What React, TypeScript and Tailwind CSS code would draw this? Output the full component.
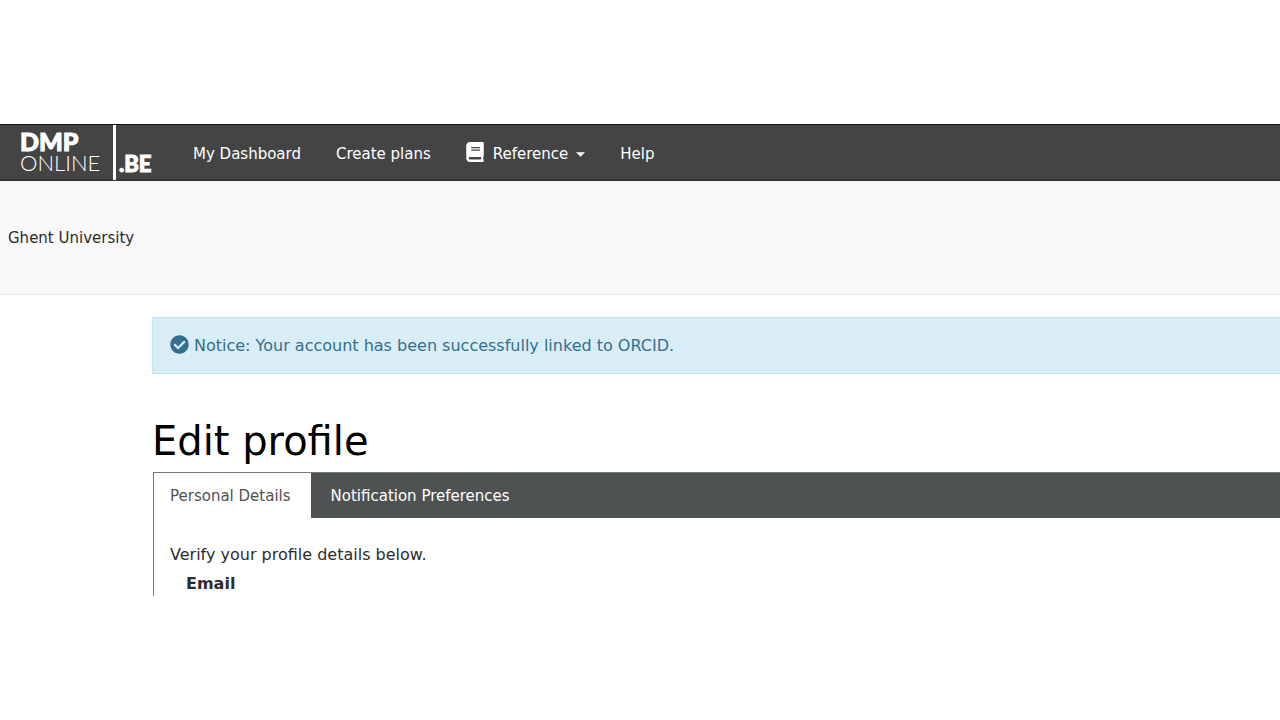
import { FaBook, FaCheckCircle } from "react-icons/fa";

function Logo() {
  return (
    <svg viewBox="0 0 160 56" className="h-14 w-40 fill-white" role="img" aria-label="DMPonline.be">
      <text x="20" y="26" fontSize="25" fontWeight="900" fontFamily="Lato, sans-serif" stroke="white" strokeWidth="1">DMP</text>
      <text x="20" y="46" fontSize="22" fontWeight="300" fontFamily="Lato, sans-serif">ONLINE</text>
      <rect x="113" y="0" width="3" height="55" />
      <text x="119" y="47" fontSize="22" fontWeight="900" fontFamily="Lato, sans-serif" stroke="white" strokeWidth="1">.BE</text>
    </svg>
  );
}

function Header() {
  return (
    <header className="flex h-[57px] items-stretch border-t border-b-2 border-t-[#111111] border-b-[#333333] bg-[#444444]">
      <a href="#home" className="block h-14 w-40 shrink-0">
        <Logo />
      </a>
      <nav aria-label="Main" className="flex items-center gap-[35px] pt-[3px] pl-[33px] text-white">
        <a href="#dashboard">My Dashboard</a>
        <a href="#create">Create plans</a>
        <button type="button" className="flex items-center">
          <FaBook className="mr-[9px] -mt-1 h-5 w-[18px]" aria-hidden="true" />
          Reference
          <svg viewBox="0 0 10 5" className="mt-0.5 ml-2 h-[5px] w-[9px] fill-white" aria-hidden="true">
            <path d="M0 0h10L5 5z" />
          </svg>
        </button>
        <a href="#help">Help</a>
      </nav>
    </header>
  );
}

export default function App() {
  return (
    <div className="overflow-x-hidden bg-white py-31 font-['DejaVu_Sans',Verdana,sans-serif] text-[15px] leading-6 text-[#2c2c2c]">
      <Header />
      <div className="border-b border-[#e7e7e7] bg-[#f8f8f8] px-2 pt-[45px] pb-11">
        <p>Ghent University</p>
      </div>
      <main className="pt-[22px] pl-[152px]">
        <div role="status" className="flex items-center gap-[5px] border border-r-0 border-[#bce8f1] bg-[#d9edf7] px-[17px] pt-4 pb-[15px] text-base text-[#31708f]">
          <FaCheckCircle className="-mt-1 size-[19px]" aria-hidden="true" />
          <span>Notice: Your account has been successfully linked to ORCID.</span>
        </div>
        <h1 className="mt-10 text-[40px] leading-[54px] text-black">Edit profile</h1>
        <section className="mt-1 ml-px border-t border-l border-[#777777]">
          <div role="tablist" className="flex h-[45px] bg-[#4f5253]">
            <button type="button" role="tab" aria-selected="true" className="bg-white pr-5 pl-4 text-[#4f5253]">Personal Details</button>
            <button type="button" role="tab" aria-selected="false" className="px-5 text-white">Notification Preferences</button>
          </div>
          <div role="tabpanel" className="px-4 pt-[25px]">
            <p className="text-base">Verify your profile details below.</p>
            <p className="mt-[5px] px-4 text-base font-bold">Email</p>
          </div>
        </section>
      </main>
    </div>
  );
}
